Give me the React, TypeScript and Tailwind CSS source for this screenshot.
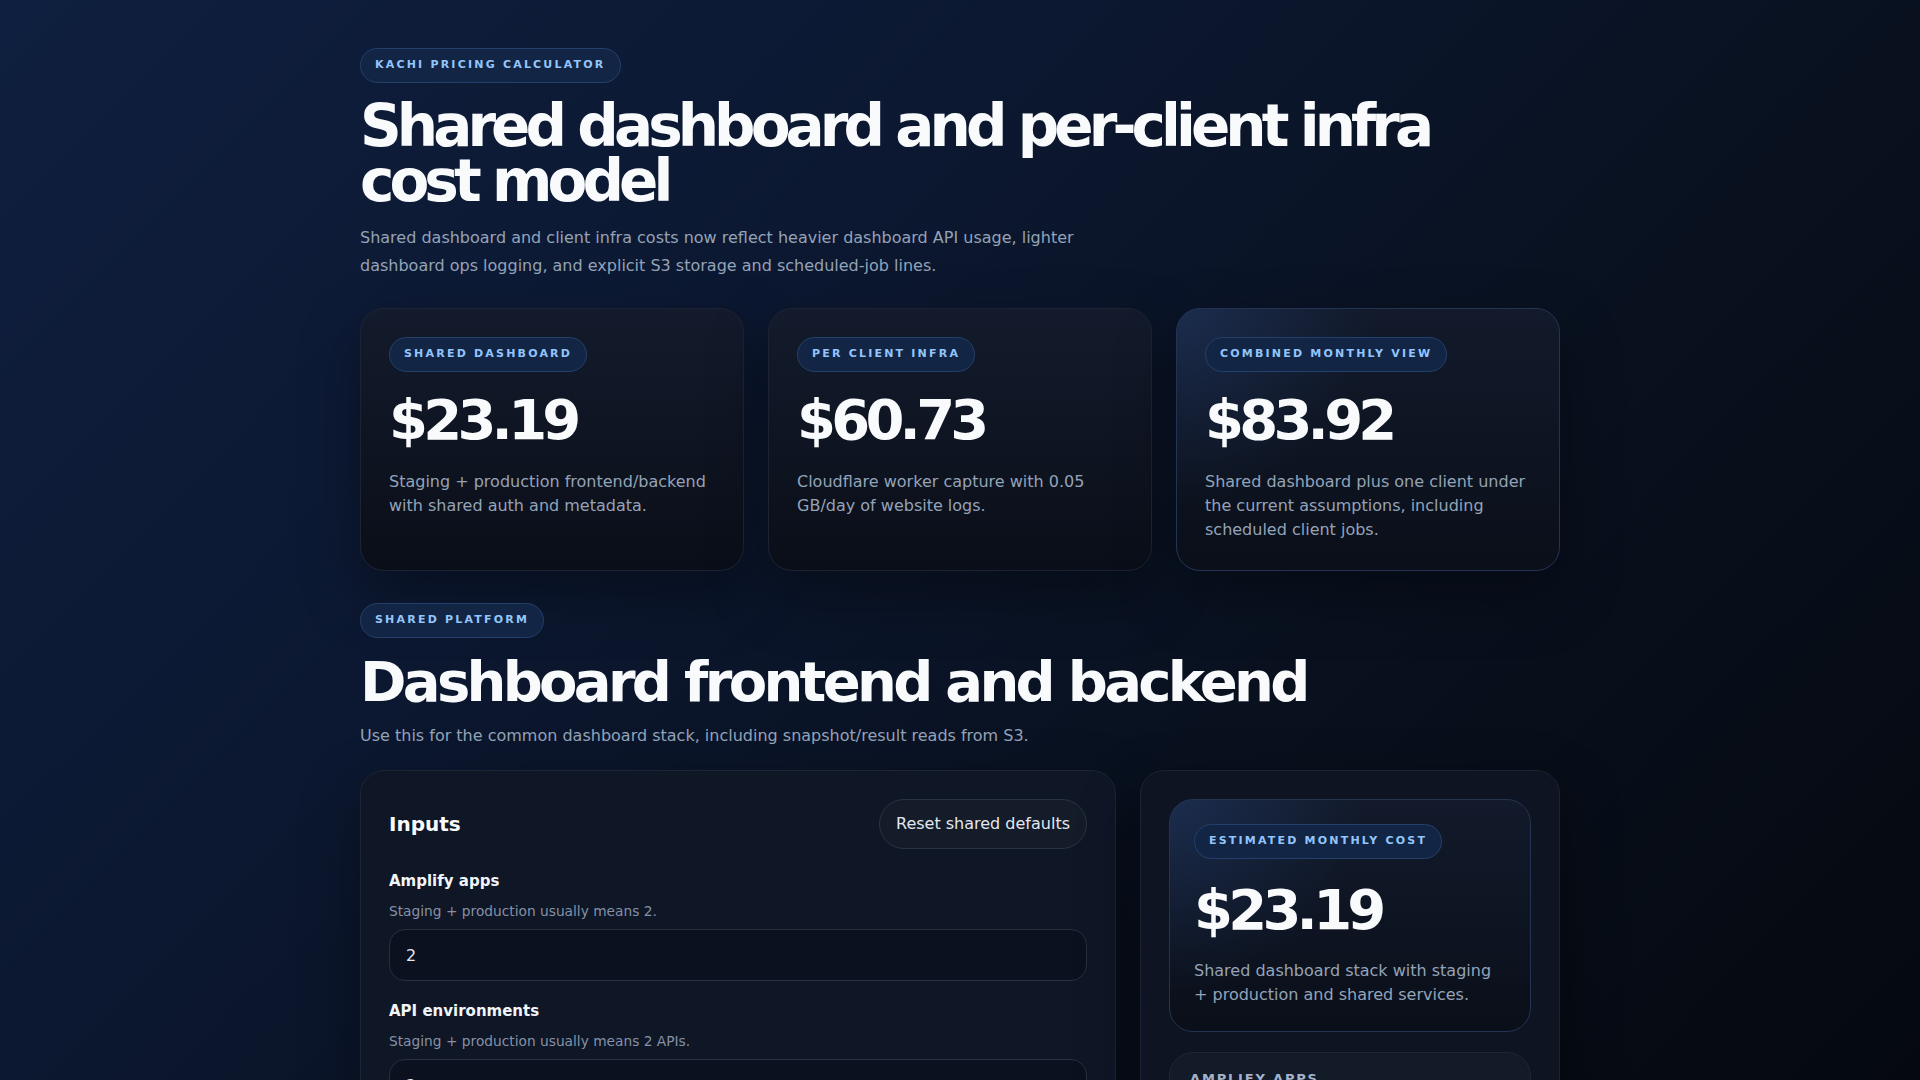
import { useState } from 'react';

type Summary = {
  label: string;
  value: string;
  note: string;
  highlight?: boolean;
};

const summaries: Summary[] = [
  {
    label: 'Shared dashboard',
    value: '$23.19',
    note: 'Staging + production frontend/backend with shared auth and metadata.',
  },
  {
    label: 'Per client infra',
    value: '$60.73',
    note: 'Cloudflare worker capture with 0.05 GB/day of website logs.',
  },
  {
    label: 'Combined monthly view',
    value: '$83.92',
    note: 'Shared dashboard plus one client under the current assumptions, including scheduled client jobs.',
    highlight: true,
  },
];

type Field = {
  key: string;
  label: string;
  hint: string;
  value: string;
};

const sharedDefaults: Field[] = [
  { key: 'amplifyApps', label: 'Amplify apps', hint: 'Staging + production usually means 2.', value: '2' },
  { key: 'apiEnvs', label: 'API environments', hint: 'Staging + production usually means 2 APIs.', value: '2' },
  { key: 'apiRequests', label: 'Dashboard API requests / month', hint: 'Heavier dashboard usage, including polling.', value: '1500000' },
  { key: 'opsLogs', label: 'Dashboard ops logs (GB / month)', hint: 'Lighter ops logging for the shared stack.', value: '0.5' },
  { key: 's3Storage', label: 'S3 storage (GB)', hint: 'Snapshots and results read by the dashboard.', value: '20' },
];

const lineItems = [
  { label: 'Amplify apps', value: '$4.60', note: '2 apps hosting + build minutes' },
  { label: 'API gateway + Lambda', value: '$7.85', note: '2 environments' },
  { label: 'DynamoDB metadata', value: '$3.10', note: 'On-demand reads and writes' },
  { label: 'CloudWatch logs', value: '$2.14', note: 'Dashboard ops logging' },
  { label: 'S3 storage', value: '$5.50', note: 'Snapshot/result storage and reads' },
];

function Pill({ children }: { children: React.ReactNode }) {
  return (
    <span className="inline-flex h-[35px] items-center rounded-full border border-[#23406a] bg-[#132544] px-3.5 text-[11px] font-bold uppercase tracking-[0.2em] text-[#93c5fd]">
      {children}
    </span>
  );
}

function SummaryCard({ item }: { item: Summary }) {
  return (
    <div
      className={
        item.highlight
          ? 'rounded-3xl border border-[#233453] bg-[radial-gradient(circle_at_0%_0%,rgba(59,110,200,0.22),transparent_42%),linear-gradient(180deg,#121a2b,#0a0f19)] p-7 shadow-[0_24px_60px_rgba(0,0,0,0.35)]'
          : 'rounded-3xl border border-[#1c2434] bg-gradient-to-b from-[#131b2c] to-[#0a0e18] p-7 shadow-[0_24px_60px_rgba(0,0,0,0.35)]'
      }
    >
      <Pill>{item.label}</Pill>
      <div className="mt-5 text-[56px] font-bold leading-none tracking-[-0.085em] text-[#f8fafc]">{item.value}</div>
      <p className="mt-[22px] text-base leading-6 text-[#94a3b8]">{item.note}</p>
    </div>
  );
}

export default function App() {
  const [fields, setFields] = useState(sharedDefaults);

  function update(key: string, value: string) {
    setFields((prev) => prev.map((f) => (f.key === key ? { ...f, value } : f)));
  }

  return (
    <div className="min-h-screen bg-[#08101d] bg-[linear-gradient(135deg,#0f1f3f_0%,#0c1831_35%,#09111f_65%,#05090f_100%)] bg-fixed font-['DejaVu_Sans',sans-serif] text-slate-100">
      <main className="mx-auto max-w-[1200px] pb-24 pt-12">
        {/* Hero */}
        <header>
          <Pill>Kachi pricing calculator</Pill>
          <h1 className="mt-4 text-[58px] font-bold leading-[55px] tracking-[-0.085em] text-[#f8fafc]">
            Shared dashboard and per-client infra cost model
          </h1>
          <p className="mt-[15px] max-w-[740px] text-base leading-7 text-[#94a3b8]">
            Shared dashboard and client infra costs now reflect heavier dashboard API usage, lighter dashboard ops
            logging, and explicit S3 storage and scheduled-job lines.
          </p>
        </header>

        <section className="mt-7 grid grid-cols-3 gap-6">
          {summaries.map((s) => (
            <SummaryCard key={s.label} item={s} />
          ))}
        </section>

        {/* Shared platform */}
        <section className="mt-8">
          <Pill>Shared platform</Pill>
          <h2 className="mt-4 text-[56px] font-bold leading-none tracking-[-0.066em] text-[#f8fafc]">
            Dashboard frontend and backend
          </h2>
          <p className="mt-3 text-base leading-7 text-[#94a3b8]">
            Use this for the common dashboard stack, including snapshot/result reads from S3.
          </p>

          <div className="mt-5 grid grid-cols-[minmax(0,1fr)_420px] items-start gap-6">
            <div className="rounded-3xl border border-[#1d2535] bg-[#0f1626] p-7 shadow-[0_24px_60px_rgba(0,0,0,0.35)]">
              <div className="flex items-center justify-between">
                <h3 className="text-xl font-bold leading-7 text-[#f8fafc]">Inputs</h3>
                <button
                  onClick={() => setFields(sharedDefaults)}
                  className="rounded-full border border-[#2a3344] bg-[#141b29] px-4 py-3 text-base leading-6 text-[#e2e8f0]"
                >
                  Reset shared defaults
                </button>
              </div>

              <div className="mt-5 flex flex-col gap-[18px]">
                {fields.map((f) => (
                  <label key={f.key} className="flex flex-col gap-2">
                    <span className="text-[15px] font-bold leading-6 text-[#f1f5f9]">{f.label}</span>
                    <span className="text-[0.86rem] leading-5 text-[#8591a6]">{f.hint}</span>
                    <input
                      value={f.value}
                      onChange={(e) => update(f.key, e.target.value)}
                      className="h-[52px] rounded-2xl border border-[#263041] bg-[#0b111e] px-4 text-base text-[#e2e8f0] outline-none"
                    />
                  </label>
                ))}
              </div>
            </div>

            <aside className="rounded-3xl border border-[#1c2433] bg-[#0e1421] p-7 shadow-[0_24px_60px_rgba(0,0,0,0.45)]">
              <div className="rounded-3xl border border-[#22344f] bg-[radial-gradient(circle_at_0%_0%,rgba(59,110,200,0.22),transparent_45%),linear-gradient(180deg,#121a2b,#0a0f19)] p-6">
                <Pill>Estimated monthly cost</Pill>
                <div className="mt-[23px] text-[56px] font-bold leading-none tracking-[-0.085em] text-[#f8fafc]">
                  $23.19
                </div>
                <p className="mt-[21px] text-base leading-6 text-[#94a3b8]">
                  Shared dashboard stack with staging + production and shared services.
                </p>
              </div>

              <div className="mt-5 flex flex-col gap-3">
                {lineItems.map((li) => (
                  <div key={li.label} className="rounded-3xl border border-[#1e2738] bg-[#131a28] px-5 pb-4 pt-4">
                    <div className="text-[13px] font-bold uppercase leading-5 tracking-[0.14em] text-[#a3b3cc]">
                      {li.label}
                    </div>
                    <div className="mt-2 text-2xl font-bold text-[#f8fafc]">{li.value}</div>
                    <div className="mt-1 text-sm text-[#8591a6]">{li.note}</div>
                  </div>
                ))}
              </div>
            </aside>
          </div>
        </section>
      </main>
    </div>
  );
}
